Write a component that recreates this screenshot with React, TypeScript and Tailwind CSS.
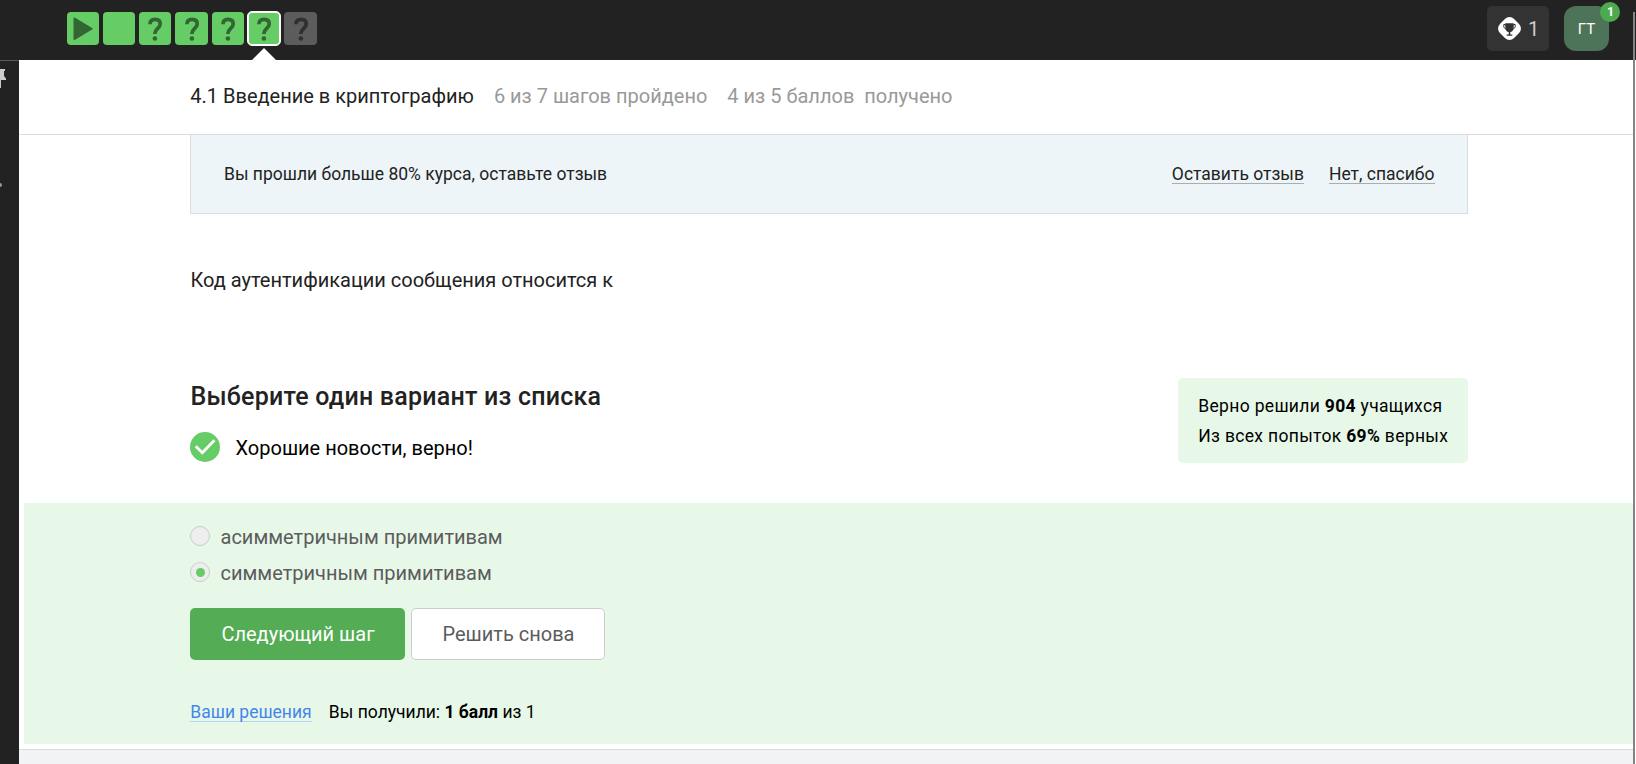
import React from "react";

function Question({ className }: { className: string }) {
  return (
    <svg viewBox="0 0 32 32" className={`h-8 w-8 ${className}`} fill="none" aria-hidden="true">
      <path
        d="M10.900 11.200C11 8 13 6.400 16 6.400c3.300 0 5.200 1.700 5.200 4.500 0 4.400-5.400 4.700-5.400 10.100"
        stroke="currentColor"
        strokeWidth="3.700"
      />
      <circle cx="15.900" cy="25.500" r="2.300" fill="currentColor" />
    </svg>
  );
}

function Steps() {
  const box = "flex h-[33px] w-[32.250px] items-center justify-center rounded-[4px]";
  return (
    <nav className="flex h-full items-start gap-1 pl-[66.700px] pt-3">
      <div className={`${box} bg-[#66cc66]`}>
        <svg viewBox="0 0 32 32" className="h-8 w-8" aria-hidden="true">
          <path d="M6.500 5.600q0-1.800 1.600-.8l17 10.200q1.400.8 0 1.600l-17 10.200q-1.600 1-1.600-.8z" fill="#336633" />
        </svg>
      </div>
      <div className={`${box} bg-[#66cc66]`} />
      <div className={`${box} bg-[#66cc66]`}><Question className="text-[#336633]" /></div>
      <div className={`${box} bg-[#66cc66]`}><Question className="text-[#336633]" /></div>
      <div className={`${box} bg-[#66cc66]`}><Question className="text-[#336633]" /></div>
      <div className={`${box} relative bg-[#66cc66] ring-[1px] ring-white ring-inset outline outline-white`}>
        <Question className="text-[#336633]" />
        <svg viewBox="0 0 24 12" className="absolute top-9 left-[4px] h-3 w-6" aria-hidden="true">
          <path d="M0 12L12 0l12 12z" fill="#fff" />
        </svg>
      </div>
      <div className="flex h-[33px] w-[33px] items-center justify-center rounded-[4px] bg-[#5c5c5c]">
        <Question className="text-[#303030]" />
      </div>
    </nav>
  );
}

function Header() {
  return (
    <header className="flex h-[60px] shrink-0 justify-between bg-[#222222]">
      <Steps />
      <div className="flex gap-[15px] pr-[27px]">
        <div className="mt-1.5 flex h-[45px] w-[62px] items-center rounded-[5px] bg-[#333333] pl-2.5">
          <svg viewBox="0 0 25 25" className="h-[25px] w-[25px]" aria-hidden="true">
            <rect x="2.500" y="2.500" width="20" height="20" rx="6.500" transform="rotate(45 12.500 12.500)" fill="#fff" />
            <path d="M8.300 7.300h8.400v3.900c0 3-1.700 4.600-3.400 4.900v2.300h2v1.300H9.700v-1.300h2v-2.300c-1.700-.3-3.400-1.900-3.400-4.900z" fill="#333" />
            <path d="M8.700 8.500H6.800v1.700c0 1.700 1 2.700 2.700 3M16.300 8.500h1.900v1.700c0 1.700-1 2.700-2.700 3" fill="none" stroke="#333" strokeWidth="1" />
          </svg>
          <span className="ml-1.5 text-[20px] leading-none text-[#cccccc]">1</span>
        </div>
        <div className="relative mt-1.5 flex h-[45px] w-[45px] items-center justify-center rounded-[12px] bg-[#4d7358] text-[15px] text-white">
          <span className="pt-px">ГТ</span>
          <span className="absolute -top-1 -right-[11px] flex h-5 w-5 items-center justify-center rounded-full bg-[#4caa50] pt-px pl-px text-[12.500px] font-bold">1</span>
        </div>
      </div>
    </header>
  );
}

function Sidebar() {
  return (
    <aside className="flex w-[19px] shrink-0 flex-col border-t border-[#5a5a5a] bg-[#222222]">
      <svg viewBox="0 0 6 19" className="mt-2 h-[19px] w-1.5" aria-hidden="true">
        <path d="M0 0h5v2H4v5l2 2.500V11H1v8H0z" fill="#cccccc" />
      </svg>
      <span className="mt-[95px] h-1 w-0.5 rounded-r-full bg-[#999999]" />
    </aside>
  );
}

function Radio({ label, checked }: { label: string; checked?: boolean }) {
  return (
    <label className="flex h-9 items-center gap-[10.500px] text-[20px] text-[#5c5c5c]">
      <span className="flex h-5 w-5 items-center justify-center rounded-full border border-[#cccccc] bg-[#eeeeee]">
        {checked && <span className="h-[9px] w-[9px] rounded-full bg-[#66cc66]" />}
      </span>
      <span className="pt-0.5">{label}</span>
    </label>
  );
}

function Lesson() {
  return (
    <main className="flex min-w-0 flex-1 flex-col bg-white">
      <div className="flex h-[75px] shrink-0 items-center border-b border-[#dcdcdc] pl-[171.300px] pb-0.5 text-[20px] whitespace-pre text-[#999999]">
        <h1 className="mr-5 text-[#222222]">4.1 Введение в криптографию</h1>
        <span className="mr-5">6 из 7 шагов пройдено</span>
        <span>4 из 5 баллов  получено</span>
      </div>

      <div className="ml-[171px] flex h-[79px] w-[1278px] shrink-0 items-center border-x border-b border-[#dadde0] bg-[#edf5f8] pr-[32.500px] pl-[33px] text-[17.500px] text-[#222222]">
        <span className="flex-1">Вы прошли больше 80% курса, оставьте отзыв</span>
        <a className="mr-[25px] border-b border-[#a9aeb1] pt-0.5 leading-[17px]">Оставить отзыв</a>
        <a className="border-b border-[#a9aeb1] pt-0.5 leading-[17px]">Нет, спасибо</a>
      </div>

      <p className="mt-[51px] ml-[171.500px] text-[20px] leading-[30px] text-[#222222]">
        Код аутентификации сообщения относится к
      </p>

      <section className="mt-[83px] ml-[171px] flex h-[125px] w-[1278px] shrink-0 items-start justify-between">
        <div>
          <h2 className="pl-[0.500px] text-[25px] leading-[38px] font-medium tracking-[0.220px] text-[#222222]">Выберите один вариант из списка</h2>
          <div className="mt-[15px] flex items-center gap-[15.500px] text-[20px] leading-[30px] text-black">
            <svg viewBox="0 0 30 30" className="h-[30px] w-[30px]" aria-hidden="true">
              <circle cx="15" cy="15" r="15" fill="#66cc66" />
              <path d="M5.800 14.300l6.500 6.500L24.500 8.300" fill="none" stroke="#fff" strokeWidth="2.800" />
            </svg>
            <span className="pt-0.5">Хорошие новости, верно!</span>
          </div>
        </div>
        <div className="h-[85px] w-[290px] rounded-[5px] bg-[#e7f8e9] pt-[13px] pl-[20.300px] text-[17.500px] leading-[30px] tracking-[0.320px] whitespace-nowrap text-black">
          <p>Верно решили <b>904</b> учащихся</p>
          <p>Из всех попыток <b>69%</b> верных</p>
        </div>
      </section>

      <section className="ml-[5px] h-[241px] shrink-0 bg-[#e7f8e9] pt-[15px] pl-[166px]">
        <Radio label="асимметричным примитивам" />
        <Radio label="симметричным примитивам" checked />
        <div className="mt-[18px] flex gap-1.5 text-[20px]">
          <button className="h-[52px] w-[215px] rounded-[5px] bg-[#54ad54] pl-px text-white">Следующий шаг</button>
          <button className="h-[52px] w-[194px] rounded-[5px] border border-[#cccccc] bg-white pl-px text-[#5c5c5c]">Решить снова</button>
        </div>
        <div className="mt-[42px] flex gap-[17.200px] pl-[0.300px] text-[17.500px] leading-[17px] text-black">
          <a className="border-b border-[#b7d5ef] pt-0.5 text-[#4485ed]">Ваши решения</a>
          <span className="pt-0.5">Вы получили: <b>1 балл</b> из 1</span>
        </div>
      </section>

      <div className="mt-[5px] flex-1 border-t border-[#dadde0] bg-[#f2f3f5]" />
    </main>
  );
}

export default function App() {
  return (
    <div className="relative flex h-[764px] w-[1636px] flex-col overflow-hidden bg-white font-[Roboto,sans-serif]">
      <Header />
      <div className="flex min-h-0 flex-1">
        <Sidebar />
        <Lesson />
        <div className="w-[3px] shrink-0 bg-white" />
      </div>
      <div className="absolute top-3 right-[1px] bottom-0 w-0.5 bg-[#858585]" />
    </div>
  );
}
